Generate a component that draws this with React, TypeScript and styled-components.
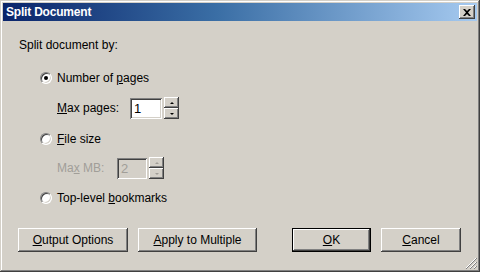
import React from 'react'
import styled, { createGlobalStyle, css } from 'styled-components'

const Global = createGlobalStyle`
  html, body {
    margin: 0;
    padding: 0;
    background: #d4d0c8;
  }
  body {
    font-family: "Liberation Sans", Arial, sans-serif;
    font-size: 12px;
    color: #000;
  }
`

const Window = styled.div`
  width: 480px;
  height: 272px;
  box-sizing: border-box;
  padding: 3px;
  background: #d4d0c8;
  display: flex;
  flex-direction: column;
  box-shadow: inset -1px -1px #404040, inset 1px 1px #d4d0c8,
    inset -2px -2px #808080, inset 2px 2px #ffffff;
`

const TitleBar = styled.div`
  height: 18px;
  display: flex;
  align-items: center;
  justify-content: space-between;
  padding: 0 2px 0 3px;
  background: linear-gradient(to right, #0a246a 0%, #3a6ea5 45%, #a6caf0 100%);
`

const Title = styled.span`
  color: #fff;
  font-weight: bold;
  font-size: 12px;
  letter-spacing: -0.2px;
`

const CloseBtn = styled.div`
  width: 16px;
  height: 14px;
  box-sizing: border-box;
  background: #d4d0c8;
  display: flex;
  align-items: center;
  justify-content: center;
  box-shadow: inset -1px -1px #404040, inset 1px 1px #ffffff,
    inset -2px -2px #808080, inset 2px 2px #d4d0c8;
`

const Content = styled.div`
  flex: 1;
  display: flex;
  flex-direction: column;
  padding: 0 13px 17px 16px;
`

const Heading = styled.div`
  margin-top: 17px;
  line-height: 14px;
`

const Options = styled.div`
  display: flex;
  flex-direction: column;
  padding-left: 21px;
`

const RadioRow = styled.label<{ $top: number }>`
  display: flex;
  align-items: center;
  gap: 5px;
  height: 16px;
  margin-top: ${p => p.$top}px;
`

const RadioDot = styled.span<{ $checked?: boolean }>`
  position: relative;
  width: 12px;
  height: 12px;
  box-sizing: border-box;
  border-radius: 50%;
  background: #fff;
  border: 1px solid;
  border-color: #808080 #ffffff #ffffff #808080;
  box-shadow: inset 1px 1px #404040, inset -1px -1px #d4d0c8;
  ${p =>
    p.$checked &&
    css`
      &::after {
        content: '';
        position: absolute;
        left: 3px;
        top: 3px;
        width: 4px;
        height: 4px;
        border-radius: 50%;
        background: #000;
      }
    `}
`

const SpinRow = styled.div<{ $top: number; $disabled?: boolean }>`
  display: flex;
  align-items: center;
  height: 22px;
  margin-top: ${p => p.$top}px;
  padding-left: 17px;
  color: ${p => (p.$disabled ? '#a19e98' : '#000')};
`

const SpinLabel = styled.span<{ $w: number }>`
  width: ${p => p.$w}px;
`

const TextBox = styled.div<{ $w: number; $disabled?: boolean }>`
  width: ${p => p.$w}px;
  height: 21px;
  box-sizing: border-box;
  padding: 3px 4px;
  line-height: 15px;
  font-size: 13px;
  background: ${p => (p.$disabled ? '#d4d0c8' : '#fff')};
  color: ${p => (p.$disabled ? '#a19e98' : '#000')};
  box-shadow: inset 1px 1px #808080, inset -1px -1px #ffffff,
    inset 2px 2px #404040, inset -2px -2px #d4d0c8;
`

const Spinner = styled.div`
  display: flex;
  flex-direction: column;
  margin-left: 2px;
  width: 15px;
  height: 22px;
`

const SpinHalf = styled.div<{ $down?: boolean; $disabled?: boolean }>`
  flex: 1;
  display: flex;
  align-items: center;
  justify-content: center;
  background: #d4d0c8;
  box-shadow: inset -1px -1px #404040, inset 1px 1px #ffffff,
    inset -2px -2px #808080;
  &::after {
    content: '';
    width: 0;
    height: 0;
    border-left: 2px solid transparent;
    border-right: 2px solid transparent;
    ${p =>
      p.$down
        ? css`border-top: 2px solid ${p.$disabled ? '#a19e98' : '#000'};`
        : css`border-bottom: 2px solid ${p.$disabled ? '#a19e98' : '#000'};`}
  }
`

const Footer = styled.div`
  margin-top: auto;
  margin-left: -1px;
  display: flex;
  align-items: center;
`

const Button = styled.div<{ $w: number; $default?: boolean; $gap: number }>`
  width: ${p => p.$w}px;
  height: 24px;
  margin-left: ${p => p.$gap}px;
  box-sizing: border-box;
  display: flex;
  align-items: center;
  justify-content: center;
  background: #d4d0c8;
  ${p =>
    p.$default
      ? css`
          border: 1px solid #000;
          box-shadow: inset -1px -1px #404040, inset 1px 1px #ffffff,
            inset -2px -2px #808080;
        `
      : css`
          box-shadow: inset -1px -1px #404040, inset 1px 1px #ffffff,
            inset -2px -2px #808080, inset 2px 2px #d4d0c8;
        `}
`

const Grip = styled.svg`
  position: absolute;
  right: 3px;
  bottom: 3px;
`

const Frame = styled.div`
  position: relative;
`

function SpinBox({ label, value, labelW, boxW, disabled, top }: {
  label: React.ReactNode
  value: string
  labelW: number
  boxW: number
  disabled?: boolean
  top: number
}) {
  return (
    <SpinRow $top={top} $disabled={disabled}>
      <SpinLabel $w={labelW}>{label}</SpinLabel>
      <TextBox $w={boxW} $disabled={disabled}>{value}</TextBox>
      <Spinner>
        <SpinHalf $disabled={disabled} />
        <SpinHalf $down $disabled={disabled} />
      </Spinner>
    </SpinRow>
  )
}

export default function App() {
  return (
    <Frame>
      <Global />
      <Window>
        <TitleBar>
          <Title>Split Document</Title>
          <CloseBtn>
            <svg width="8" height="7" viewBox="0 0 8 7">
              <path d="M0 0h2l2 2 2-2h2L5 3.5 8 7H6L4 5 2 7H0l3-3.5z" fill="#000" />
            </svg>
          </CloseBtn>
        </TitleBar>
        <Content>
          <Heading>Split document by:</Heading>
          <Options>
            <RadioRow $top={18}>
              <RadioDot $checked />
              <span>Number of <u>p</u>ages</span>
            </RadioRow>
            <SpinBox top={11} label={<><u>M</u>ax pages:</>} value="1" labelW={73} boxW={32} />
            <RadioRow $top={12}>
              <RadioDot />
              <span><u>F</u>ile size</span>
            </RadioRow>
            <SpinBox top={10} label={<>Ma<u>x</u> MB:</>} value="2" labelW={60} boxW={30} disabled />
            <RadioRow $top={11}>
              <RadioDot />
              <span>Top-level <u>b</u>ookmarks</span>
            </RadioRow>
          </Options>
          <Footer>
            <Button $w={110} $gap={0}><u>O</u>utput Options</Button>
            <Button $w={119} $gap={10}><u>A</u>pply to Multiple</Button>
            <Button $w={79} $gap={35} $default><u>O</u>K</Button>
            <Button $w={80} $gap={10}><u>C</u>ancel</Button>
          </Footer>
        </Content>
      </Window>
      <Grip width="12" height="12" viewBox="0 0 12 12">
        <path d="M11 1L1 11M11 5L5 11M11 9L9 11" stroke="#fff" strokeWidth="1" />
        <path d="M12 1L1 12M12 5L5 12M12 9L9 12" stroke="#808080" strokeWidth="1" />
      </Grip>
    </Frame>
  )
}
